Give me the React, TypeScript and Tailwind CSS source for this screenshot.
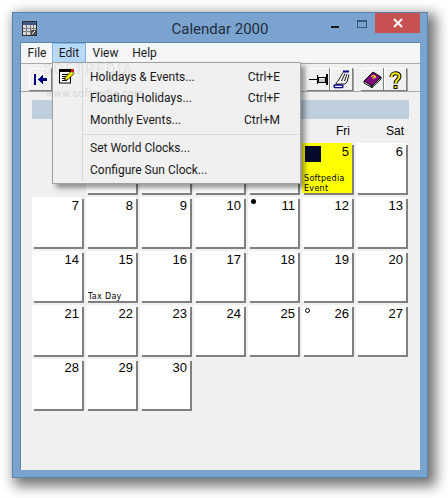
import React from "react";

const sans = "font-['Roboto',sans-serif]";
// only Fri and Sat show, the rest of the row is under the open menu
const days = ["", "", "", "", "", "Fri", "Sat"];

const CalIcon = () => (
    <svg width="15" height="15" viewBox="0 0 15 15" shapeRendering="crispEdges" className="ml-[2px]">
        <rect x="0.5" y="0.5" width="14" height="14" fill="#d8d8d8" stroke="#303030" />
        <rect x="1" y="1" width="13" height="3" fill="#3c5a8c" />
        <path d="M1 7h13M1 10h13M4.5 4v10M8 4v10M11.5 4v10" stroke="#808080" />
        <rect x="9" y="9" width="5" height="5" fill="#505050" />
        <path d="M10 13l3-3" stroke="#fff" />
    </svg>
);

const BackIcon = () => (
    <svg width="13" height="11" viewBox="0 0 13 11" shapeRendering="crispEdges">
        <rect x="0" y="0" width="2" height="11" fill="#000080" />
        <path d="M4 5h1V4h1V3h1V2h1V1h1v3h4v3H9v3H8V9H7V8H6V7H5V6H4z" fill="#000080" />
    </svg>
);

const NoteIcon = () => (
    <svg width="16" height="16" viewBox="0 0 16 16">
        <rect x="0.5" y="1.5" width="11" height="13.5" fill="#fff" stroke="#000" />
        <rect x="1" y="1" width="10" height="3" fill="#000" />
        <path d="M3 6.5h6M3 8.5h4M3 10.5h3M3 12.5h5" stroke="#000" />
        <path d="M5.5 12.5l1-3.5 6-6 2.5 2.5-6 6z" fill="#f8f000" stroke="#000" strokeWidth="0.8" />
        <rect x="12" y="1" width="3" height="3" fill="#d02020" />
    </svg>
);

const PinIcon = () => (
    <svg width="19" height="11" viewBox="0 0 19 11" shapeRendering="crispEdges">
        <rect x="0" y="5" width="8" height="1" fill="#000" />
        <rect x="8" y="1" width="1" height="9" fill="#000" />
        <rect x="9" y="3" width="7" height="5" fill="#c8c8c8" stroke="#000" />
        <rect x="17" y="0" width="2" height="11" fill="#000" />
        <rect x="10" y="4" width="5" height="1" fill="#fff" />
    </svg>
);

const HandIcon = () => (
    <svg width="17" height="19" viewBox="0 0 17 19">
        <path d="M10 1.5h6" stroke="#000080" strokeWidth="2" />
        <path d="M10 2.5L5 11M12 3.5L8.5 11M14 4l-2.5 7M16 4.5L14 12" stroke="#000" strokeWidth="0.9" fill="none" />
        <path d="M5 11c-1 1-2 2-2 3h9l2-2" stroke="#000" strokeWidth="0.9" fill="#fff" />
        <rect x="1" y="15" width="9" height="2.6" rx="1.3" fill="#fff" stroke="#000080" strokeWidth="1.4" />
    </svg>
);

const BookIcon = () => (
    <svg width="19" height="17" viewBox="0 0 19 17">
        <path d="M1 10L10 1l8 5-9 9z" fill="#800080" stroke="#000" />
        <path d="M1 10l8 5v1.5L1 12z" fill="#fff" stroke="#000" />
        <path d="M9 15l9-9v2l-9 8.5z" fill="#d0d0d0" stroke="#000" />
        <path d="M8 5.5l3-1 1.5 1.5-3 1.5" stroke="#f8f000" strokeWidth="1.3" fill="none" />
    </svg>
);

const HelpIcon = () => (
    <svg width="13" height="18" viewBox="0 0 13 18">
        <path d="M2.5 6C2.5 1 10.5 1 10.5 5.5c0 3-4 3-4 7" fill="none" stroke="#000" strokeWidth="4" />
        <rect x="4.5" y="14" width="4" height="4" fill="#000" />
        <path d="M2.5 6C2.5 1 10.5 1 10.5 5.5c0 3-4 3-4 7" fill="none" stroke="#f8f000" strokeWidth="2" />
        <rect x="5.5" y="15" width="2" height="2" fill="#f8f000" />
    </svg>
);

const ToolButton = ({ children }: { children?: React.ReactNode }) => (
    <div className="w-[23px] h-[23px] flex items-center justify-center bg-[#f0f0f0] shadow-[inset_-1px_-1px_0_#808080,inset_1px_1px_0_#ffffff,1px_1px_0_#a0a0a0]">
        {children}
    </div>
);

const MenuRow = ({ label, keys }: { label: string; keys?: string }) => (
    <div className="h-[21.5px] flex items-center justify-between pl-[37px] pr-[20px] text-[12px] text-[#1a1a1a]">
        <span>{label}</span>
        {keys && <span>{keys}</span>}
    </div>
);

const DayCell = ({ n, yellow, children }: { n?: number; yellow?: boolean; children?: React.ReactNode }) => {
    if (n === undefined) return <div className="h-[50px]" />;
    return (
        <div
            className={`relative h-[50px] text-right pr-[3px] pt-[2px] text-[13px] leading-[14px] text-black shadow-[2px_2px_0_#808080] ${
                yellow ? "bg-[#ffff00]" : "bg-white"
            }`}
        >
            {n > 4 ? n : null}
            {children}
        </div>
    );
};

const SmallNote = ({ children }: { children: React.ReactNode }) => (
    <div className="absolute left-[2px] bottom-[-1px] text-left text-[8px] leading-[10px] tracking-[0.3px] font-['DejaVu_Sans',sans-serif]">
        {children}
    </div>
);

const cellExtras: Record<number, React.ReactNode> = {
    5: (
        <>
            <div className="absolute left-[3px] top-[3px] w-[16px] h-[16px] bg-[#060b2a]" />
            <SmallNote>
                Softpedia
                <br />
                Event
            </SmallNote>
        </>
    ),
    11: <div className="absolute left-[3px] top-[2px] w-[5px] h-[5px] rounded-full bg-black" />,
    15: <SmallNote>Tax Day</SmallNote>,
    26: <div className="absolute left-[3px] top-[3px] w-[5px] h-[5px] rounded-full border border-black" />,
};

export default function App() {
    const cells: (number | undefined)[] = [undefined];
    for (let i = 1; i <= 30; i++) cells.push(i);

    return (
        <div className={`w-[448px] h-[498px] bg-white pl-[12px] pt-[12px] overflow-hidden ${sans}`}>
            {/* window frame */}
            <div className="w-[416px] h-[466px] flex flex-col px-[7px] pb-[7px] bg-[#7ba3cf] border border-[#5c84ab] shadow-[5px_5px_12px_3px_rgba(0,0,0,0.55)]">
                {/* title bar */}
                <div className="relative h-[29px] shrink-0 flex items-start">
                    <div className="mt-[8px]">
                        <CalIcon />
                    </div>
                    <div className="absolute inset-x-0 top-[4px] text-center text-[15px] leading-[24px] text-[#1f2d3d]">
                        Calendar 2000
                    </div>
                    <div className="ml-auto flex items-start">
                        <div className="w-[8px] h-[2px] bg-[#1a1a1a] mt-[13px] mr-[18px]" />
                        <div className="w-[10px] h-[8px] border border-[#3a5878] border-t-2 mt-[7px] mr-[8px]" />
                        <div className="w-[45px] h-[20px] bg-[#c75050] flex items-center justify-center text-white">
                            <svg width="10" height="10" viewBox="0 0 10 10">
                                <path d="M1 1l8 8M9 1l-8 8" stroke="#fff" strokeWidth="2" />
                            </svg>
                        </div>
                    </div>
                </div>

                {/* client area */}
                <div className="relative flex-1 flex flex-col bg-[#f0f0f0] border border-[#5c84ab] border-b-0 border-r-0">
                    <div className="h-[20px] shrink-0 flex items-center bg-[#f5f6f8] text-[12px] text-[#1a1a1a]">
                        <div className="w-[31px] text-center pl-[1px]">File</div>
                        <div className="w-[34px] h-[20px] flex items-center justify-center bg-[#b9d9f9] border border-[#7fb4e6]">Edit</div>
                        <div className="w-[33px] text-center pl-[6px]">View</div>
                        <div className="w-[44px] text-center pl-[7px]">Help</div>
                    </div>

                    {/* toolbar */}
                    <div className="h-[29px] shrink-0 flex items-start pt-[4px] pl-[8px] bg-[#f0f0f0] border-t border-b border-t-[#a8a8a8] border-b-[#a8a8a8]">
                        <ToolButton>
                            <BackIcon />
                        </ToolButton>
                        <div className="flex ml-[255px]">
                            <ToolButton>
                                <PinIcon />
                            </ToolButton>
                            <ToolButton>
                                <HandIcon />
                            </ToolButton>
                        </div>
                        <div className="flex ml-[8px]">
                            <ToolButton>
                                <BookIcon />
                            </ToolButton>
                            <ToolButton>
                                <HelpIcon />
                            </ToolButton>
                        </div>
                    </div>

                    {/* calendar */}
                    <div className="px-[11px] pt-[8px]">
                        <div className="h-[19px] bg-[#bfcedd]" />
                        <div className="grid grid-cols-7 gap-x-[4px] w-[374px] h-[24px] items-center font-['Liberation_Sans',sans-serif] text-[12px] text-right text-black">
                            {days.map((d, i) => (
                                <div key={i} className="pr-[2px]">
                                    {d}
                                </div>
                            ))}
                        </div>
                        <div className="grid grid-cols-7 gap-[4px] w-[374px] font-['Liberation_Sans',sans-serif]">
                            {cells.map((n, i) => (
                                <DayCell key={i} n={n} yellow={n === 5}>
                                    {n ? cellExtras[n] : null}
                                </DayCell>
                            ))}
                        </div>
                    </div>

                    {/* edit menu */}
                    <div className="absolute left-[31px] top-[19px] w-[249px] h-[122px] py-[3px] bg-[#f0f0f0] border border-[#a0a0a0] shadow-[4px_4px_5px_rgba(0,0,0,0.4)]">
                        <div className="absolute left-[29px] top-[2px] bottom-[2px] w-px bg-[#d8d8d8]" />
                        <div className="absolute left-[6px] top-[5px]">
                            <NoteIcon />
                        </div>
                        <MenuRow label="Holidays & Events..." keys="Ctrl+E" />
                        <MenuRow label="Floating Holidays..." keys="Ctrl+F" />
                        <MenuRow label="Monthly Events..." keys="Ctrl+M" />
                        <div className="h-px bg-[#d8d8d8] ml-[30px] my-[3px]" />
                        <MenuRow label="Set World Clocks..." />
                        <MenuRow label="Configure Sun Clock..." />
                    </div>

                    {/* watermark */}
                    <div className="absolute left-[22px] top-[16px] text-[14px] tracking-[2px] text-[rgba(120,120,120,0.14)] pointer-events-none">
                        SOFTPEDIA
                    </div>
                    <div className="absolute left-[25px] top-[43px] text-[10px] tracking-[0.5px] text-[rgba(120,120,120,0.25)] pointer-events-none">
                        www.softpedia.com
                    </div>
                </div>
            </div>
        </div>
    );
}
